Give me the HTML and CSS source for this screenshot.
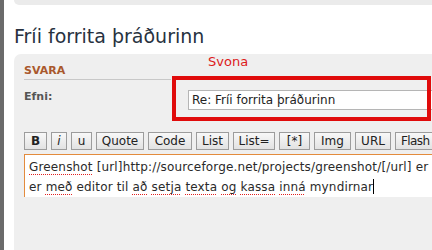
FILE: index.html
```html
<!DOCTYPE html>
<html>
<head>
<meta charset="utf-8">
<link rel="stylesheet" href="styles.css">
</head>
<body>
<div class="strip"></div>
<div class="page">
  <div class="topbar"></div>
  <h2 class="title">Fríi forrita þráðurinn</h2>
  <div class="panel">
    <div class="svona">Svona</div>
    <div class="highlight"></div>
    <div class="head">SVARA</div>
    <div class="row">
      <label class="lbl">Efni:</label>
      <div class="input">Re: Fríi forrita þráðurinn</div>
    </div>
    <div class="buttons">
      <span class="btn b w23">B</span>
      <span class="btn i w16">i</span>
      <span class="btn w21">u</span>
      <span class="btn w48">Quote</span>
      <span class="btn w44">Code</span>
      <span class="btn w33">List</span>
      <span class="btn w42">List=</span>
      <span class="btn w31">[*]</span>
      <span class="btn w37">Img</span>
      <span class="btn w36">URL</span>
      <span class="btn flash">Flash</span>
    </div>
    <div class="textarea"><span class="sp">Greenshot</span> [url]http://sourceforge.net/projects/greenshot/[/url] er<br>er <span class="sp">með</span> editor til <span class="sp">að</span> <span class="sp">setja</span> <span class="sp">texta</span> <span class="sp">og</span> <span class="sp">kassa</span> <span class="sp">inná</span> myndirnar<span class="caret"></span></div>
  </div>
</div>
</body>
</html>
```
FILE: styles.css
```css
html, body {
  margin: 0;
  padding: 0;
  background: #ffffff;
  height: 250px;
  overflow: hidden;
}
body {
  display: flex;
  font-family: "DejaVu Sans", Verdana, sans-serif;
}
.strip {
  width: 4px;
  flex: none;
  background: #6b6b6b;
}
.page {
  flex: 1;
  padding-left: 10px;
  display: flex;
  flex-direction: column;
  min-width: 0;
}
.topbar {
  height: 5px;
  background: #ebebeb;
  border-radius: 0 0 0 6px;
  margin-right: -20px;
}
.title {
  margin: 18px 0 0 0;
  font-size: 19px;
  font-weight: normal;
  color: #28323f;
  height: 31px;
  line-height: 26px;
  white-space: nowrap;
}
.panel {
  position: relative;
  flex: 1;
  background: #efefef;
  border-radius: 7px 0 0 0;
  margin-right: -20px;
  padding: 11px 0 0 10px;
}
.svona {
  position: absolute;
  left: 194px;
  top: 0px;
  color: #dd1a1a;
  font-size: 13px;
}
.highlight {
  position: absolute;
  left: 158px;
  top: 22px;
  width: 251px;
  height: 37px;
  border: 4px solid #e00b0b;
}
.head {
  font-size: 11px;
  font-weight: bold;
  color: #a9582c;
  width: 147px;
  border-bottom: 1px solid #c8c8c8;
  padding-bottom: 3px;
  height: 11px;
  line-height: 11px;
}
.row {
  display: flex;
  align-items: flex-start;
  margin-top: 10px;
  height: 42px;
}
.lbl {
  font-size: 11px;
  font-weight: bold;
  color: #555555;
  width: 164px;
  flex: none;
  line-height: 14px;
}
.input {
  flex: 1;
  height: 18px;
  background: #ffffff;
  border: 1px solid #b5b5b5;
  font-size: 12px;
  line-height: 18px;
  padding-left: 3px;
  color: #222;
  white-space: nowrap;
}
.buttons {
  display: flex;
  gap: 4px;
  white-space: nowrap;
}
.btn {
  box-sizing: border-box;
  height: 18px;
  line-height: 16px;
  border: 1px solid #9c9c9c;
  background: linear-gradient(#f8f8f8, #e2e2e2);
  font-size: 12px;
  color: #222;
  text-align: center;
  flex: none;
}
.btn.b { font-weight: bold; }
.btn.i { font-style: italic; }
.btn.flash {
  width: 50px;
  text-align: left;
  padding-left: 5px;
  letter-spacing: -0.6px;
}
.w16 { width: 16px; }
.w21 { width: 21px; }
.w23 { width: 23px; }
.w31 { width: 31px; }
.w33 { width: 33px; }
.w36 { width: 36px; }
.w37 { width: 37px; }
.w42 { width: 42px; }
.w44 { width: 44px; }
.w48 { width: 48px; }
.textarea {
  margin-top: 4px;
  flex: 1;
  background: #ffffff;
  border: 1px solid #e38b3d;
  border-right: none;
  border-bottom: none;
  font-size: 12px;
  letter-spacing: 0.16px;
  line-height: 20px;
  padding: 2px 0 0 4px;
  color: #2a2a2a;
  white-space: nowrap;
}
.sp {
  text-decoration: underline dotted #e02020;
  text-decoration-thickness: 1px;
  text-underline-offset: 3px;
}
.caret {
  display: inline-block;
  width: 1px;
  height: 15px;
  background: #000;
  vertical-align: -3px;
}
```
